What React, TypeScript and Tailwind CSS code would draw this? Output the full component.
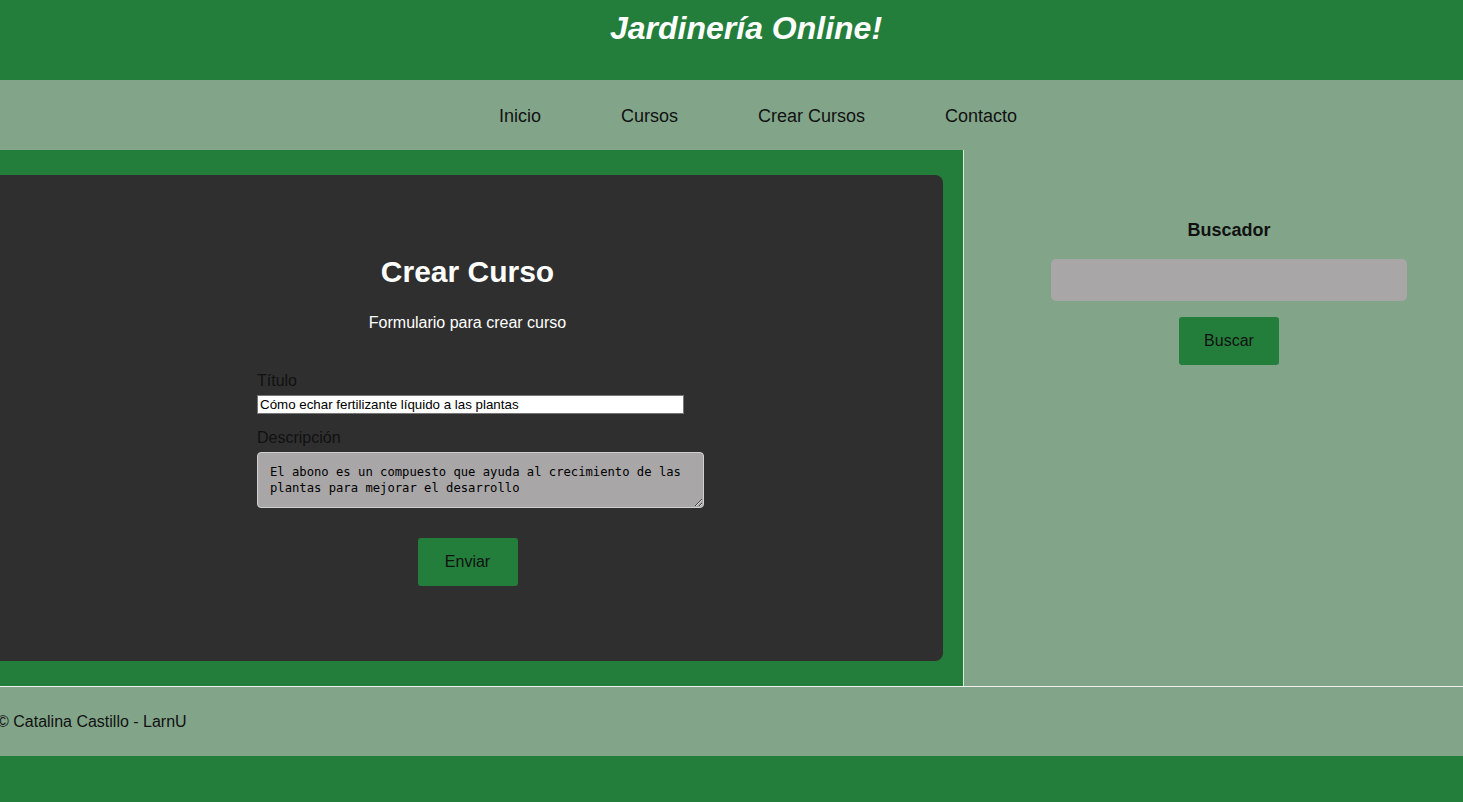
import React from "react";

const App = () => {
  return (
    <div className="min-h-screen w-full overflow-hidden bg-[#237e3b] font-['Liberation_Sans',Arial,sans-serif] text-black">
      <header className="h-[80px] pl-[29px] pt-[10px] text-center">
        <h1 className="text-[32px] font-bold italic leading-[37px] text-white">
          Jardinería Online!
        </h1>
      </header>
      <nav className="h-[70px] bg-[#82a58a]">
        <ul className="flex h-full items-center justify-center gap-[80px] pl-[53px] pt-[2px] text-[18px] text-[#111]">
          <li>Inicio</li>
          <li>Cursos</li>
          <li>Crear Cursos</li>
          <li>Contacto</li>
        </ul>
      </nav>
      <main className="flex h-[536px]">
        <section className="w-[964px] shrink-0 border-r border-[#d8ecdc] py-[25px] pr-[20px]">
          <div className="-ml-2 h-full rounded-lg bg-[#2f2f2f] pt-[79px] text-center">
            <h2 className="text-[30px] font-bold leading-[35px] text-white">
              Crear Curso
            </h2>
            <p className="mt-[25px] text-[16px] leading-[18px] text-white">
              Formulario para crear curso
            </p>
            <form className="mx-auto mt-[40px] w-[421px] text-left">
              <label className="block text-[16px] leading-[18px] text-[#111]">
                Título
              </label>
              <input
                type="text"
                defaultValue="Cómo echar fertilizante líquido a las plantas"
                className="mt-[5px] block h-[19px] w-[427px] border border-[#767676] bg-white px-[2px] text-[13.33px] leading-[17px] text-black outline-none"
              />
              <label className="mt-[15px] block text-[16px] leading-[18px] text-[#111]">
                Descripción
              </label>
              <textarea
                defaultValue="El abono es un compuesto que ayuda al crecimiento de las plantas para mejorar el desarrollo"
                className="mt-[5px] block h-[56px] w-[447px] resize-y rounded-[4px] border border-[#d0d0d0] bg-[#a8a6a7] px-[12px] pt-[11px] font-['DejaVu_Sans_Mono',monospace] text-[12.2px] leading-[16px] text-black outline-none"
              />
              <div className="mt-[30px] text-center">
                <button
                  type="button"
                  className="h-[48px] w-[100px] rounded-[3px] bg-[#237e3b] text-[16px] text-[#111]"
                >
                  Enviar
                </button>
              </div>
            </form>
          </div>
        </section>
        <aside className="flex flex-1 flex-col items-center bg-[#82a58a] pl-[31px] pt-[70px]">
          <h3 className="text-[18px] font-bold leading-[21px] text-[#111]">
            Buscador
          </h3>
          <input
            type="text"
            className="mt-[18px] h-[42px] w-[356px] rounded-[5px] bg-[#a8a6a7] outline-none"
          />
          <button
            type="button"
            className="mt-[16px] h-[48px] w-[100px] rounded-[3px] bg-[#237e3b] text-[16px] text-[#111]"
          >
            Buscar
          </button>
        </aside>
      </main>
      <footer className="flex h-[70px] items-center border-t border-[#f0f0f0] bg-[#82a58a]">
        <p className="-ml-[3px] text-[16px] text-[#111]">
          © Catalina Castillo - LarnU
        </p>
      </footer>
    </div>
  );
};

export default App;
